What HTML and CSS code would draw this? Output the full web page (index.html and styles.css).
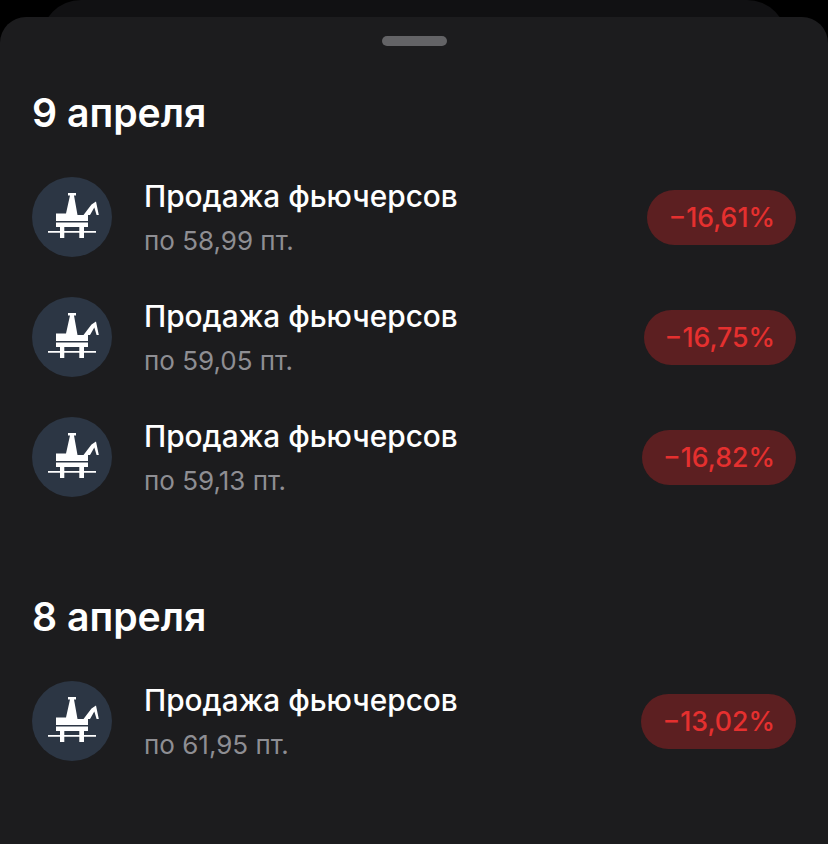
FILE: index.html
```html
<!DOCTYPE html>
<html lang="ru">
<head>
    <meta charset="UTF-8">
    <title>Операции</title>
    <link rel="stylesheet" href="styles.css">
</head>
<body>
    <svg class="sprite" width="0" height="0">
        <symbol id="rig" viewBox="0 0 80 80">
            <path d="M36 16h8v2.500h-2L45.500 38H56v6H24v-7.500h10L38 18.500H36z"/>
            <path d="M51.500 38l8-10.500 4.500-3 2.800 13.500h-2.200l-2.300-7.500-4.300 7.500z"/>
            <path d="M24 45.500h32V50h-4v11h-4.700V50H32.300v11H28V50h-4z"/>
            <path d="M16 54h48v1.800H16z"/>
        </symbol>
    </svg>

    <div class="back-card"></div>

    <div class="sheet">
        <div class="handle"></div>

        <div class="day">
            <h2>9 апреля</h2>
            <div class="row">
                <div class="logo"><svg><use href="#rig"/></svg></div>
                <div class="info">
                    <div class="title">Продажа фьючерсов</div>
                    <div class="sub">по 58,99 пт.</div>
                </div>
                <div class="pill">−16,61%</div>
            </div>
            <div class="row">
                <div class="logo"><svg><use href="#rig"/></svg></div>
                <div class="info">
                    <div class="title">Продажа фьючерсов</div>
                    <div class="sub">по 59,05 пт.</div>
                </div>
                <div class="pill">−16,75%</div>
            </div>
            <div class="row">
                <div class="logo"><svg><use href="#rig"/></svg></div>
                <div class="info">
                    <div class="title">Продажа фьючерсов</div>
                    <div class="sub">по 59,13 пт.</div>
                </div>
                <div class="pill">−16,82%</div>
            </div>
        </div>

        <div class="day">
            <h2>8 апреля</h2>
            <div class="row">
                <div class="logo"><svg><use href="#rig"/></svg></div>
                <div class="info">
                    <div class="title">Продажа фьючерсов</div>
                    <div class="sub">по 61,95 пт.</div>
                </div>
                <div class="pill">−13,02%</div>
            </div>
        </div>
    </div>
</body>
</html>
```

FILE: styles.css
```css
*{
    margin: 0;
    padding: 0;
    box-sizing: border-box;
}
html, body{
    height: 100%;
    overflow: hidden;
}
body{
    background-color: #000;
    font-family: Inter, "Noto Sans", sans-serif;
}
.sprite{
    display: block;
    height: 0;
}
.back-card{
    height: 40px;
    margin: 0 41px -23px;
    background-color: #111113;
    border-radius: 40px 40px 0 0;
}
.sheet{
    position: relative;
    height: 827px;
    padding: 19px 32px 0;
    background-color: #1c1c1e;
    border-radius: 26px 26px 0 0;
}
.handle{
    width: 65px;
    height: 10px;
    margin: 0 auto;
    background-color: #636366;
    border-radius: 5px;
}
.day{
    margin-top: 45px;
}
.day + .day{
    margin-top: 98px;
}
.day h2{
    height: 44px;
    margin-bottom: 42px;
    color: #fff;
    font-size: 39.2px;
    font-weight: 600;
    line-height: 44px;
}
.row{
    display: flex;
    align-items: center;
    height: 80px;
    margin-bottom: 40px;
}
.logo{
    flex: none;
    width: 80px;
    height: 80px;
    background-color: #2c3644;
    border-radius: 50%;
}
.logo svg{
    display: block;
    width: 80px;
    height: 80px;
    fill: #fff;
}
.info{
    flex: 1;
    margin-left: 32px;
    padding-bottom: 3px;
}
.title{
    color: #fff;
    font-size: 29.8px;
    font-weight: 500;
    line-height: 40px;
}
.sub{
    margin-top: 10px;
    color: #8e8e93;
    font-size: 26px;
    line-height: 30px;
}
.pill{
    padding: 0 21px;
    height: 55px;
    background-color: #5c1f21;
    border-radius: 28px;
    color: #e5302f;
    font-size: 26.7px;
    font-weight: 500;
    line-height: 55px;
}
```
